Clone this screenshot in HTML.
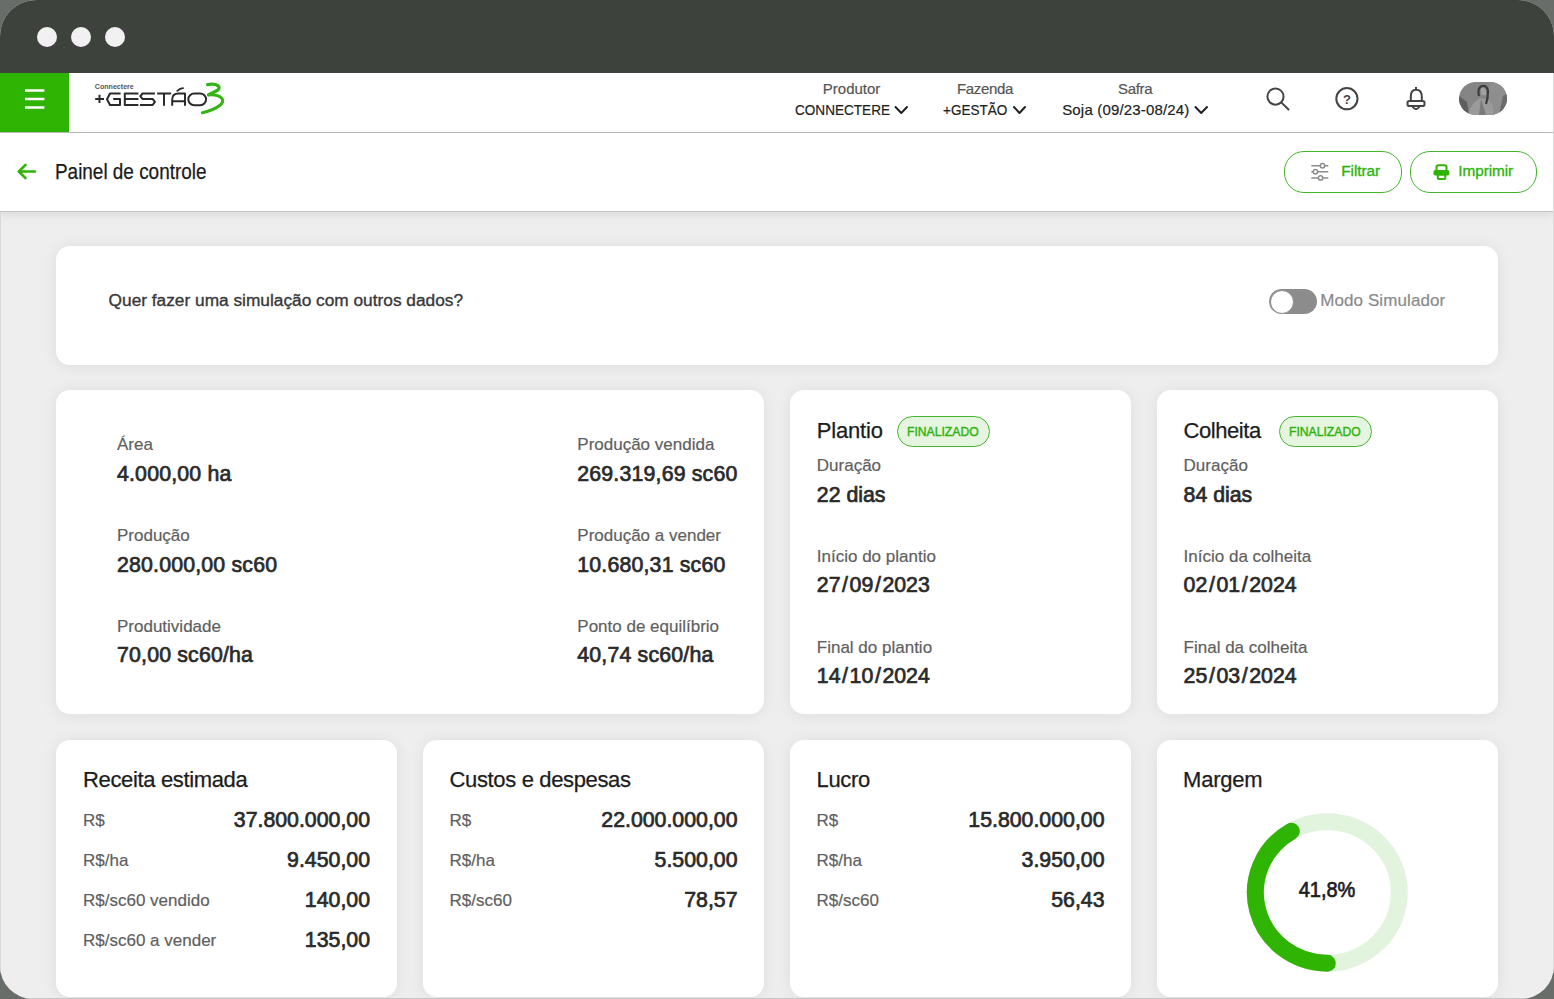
<!DOCTYPE html>
<html><head><meta charset="utf-8">
<style>
*{margin:0;padding:0;box-sizing:border-box}
html,body{width:1554px;height:999px;overflow:hidden;background:#686d69;font-family:"Liberation Sans",sans-serif}
#frame{position:absolute;left:0;top:0;width:1554px;height:999px;border-radius:36px 36px 33px 33px;overflow:hidden;background:#eeeeee}
#topbar{position:absolute;left:0;top:0;width:1554px;height:73px;background:#3e423d}
.dot{position:absolute;top:27px;width:20px;height:20px;border-radius:50%;background:#f1f1f1}
#hdr{position:absolute;left:0;top:73px;width:1554px;height:60px;background:#fff;border-bottom:1px solid #bdbdbd}
#menu{position:absolute;left:0;top:73px;width:69px;height:59px;background:#2fb404}
#sub{position:absolute;left:0;top:133px;width:1554px;height:79px;background:#fff;border-bottom:1px solid #c3c3c3;box-shadow:0 3px 9px rgba(0,0,0,.085)}
.card{position:absolute;background:#fff;border-radius:14px;box-shadow:0 1px 16px rgba(0,0,0,.075)}
.t{position:absolute;white-space:nowrap;line-height:1}
.btn{position:absolute;top:151px;height:42px;border:1.5px solid #45b52c;border-radius:20px;background:#fff}
.badge{position:absolute;top:416px;width:93px;height:31px;border:1.7px solid #45b62c;border-radius:16px;background:#e5f5e0}
svg{position:absolute;overflow:visible}
</style></head><body>
<div id="frame">
  <div id="topbar">
    <div class="dot" style="left:37px"></div>
    <div class="dot" style="left:71px"></div>
    <div class="dot" style="left:105px"></div>
  </div>
  <div id="hdr"></div>
  <div id="menu"></div>
  <!-- hamburger -->
  <svg style="left:0;top:0" width="1554" height="999">
    <g stroke="#fff" stroke-width="2.5" stroke-linecap="butt">
      <line x1="25" y1="90.4" x2="44.4" y2="90.4"/>
      <line x1="25" y1="98.9" x2="44.4" y2="98.9"/>
      <line x1="25" y1="107.4" x2="44.4" y2="107.4"/>
    </g>
  </svg>
  <!-- logo -->
  <svg style="left:0;top:0" width="1554" height="999">
    <text x="94.8" y="89" font-family="Liberation Sans" font-weight="bold" font-size="7" fill="#555" textLength="39" lengthAdjust="spacingAndGlyphs">Connectere</text>
    <g fill="none" stroke="#2a2a2a" stroke-width="2" stroke-linejoin="round">
      <path d="M95.2 98.9 H104 M99.5 94.8 V103"/>
      <path d="M120.6 93.5 H110 L107 99.2 L110 105 H120 V98.9 H113.2"/>
      <path d="M138.4 93.5 H124.8 V105 H138.4 M124.8 98.9 H138.4"/>
      <path d="M154.9 93.5 H142.5 L140.3 96.2 L142.5 98.9 H152.6 L154.9 101.9 L152.6 105 H140"/>
      <path d="M157.2 93.5 H171.1 M164 93.5 V105.8"/>
      <path d="M172.2 105.8 V99.5 Q172.2 93.5 178.5 93.5 H185 V105.8 M172.2 101.2 H185"/>
      <rect x="188.3" y="93.5" width="17.8" height="11.7" rx="6" ry="5.85"/>
    </g>
    <path d="M177.3 90.8 Q180 88.4 183 88.2" fill="none" stroke="#2a2a2a" stroke-width="1.8" stroke-linecap="round"/>
    <path d="M207.6 84.6 Q214 83.4 218.2 85.8 Q220.2 88 217.6 90.2 Q213 92.6 208.6 94.8" fill="none" stroke="#33b515" stroke-width="3.3" stroke-linecap="round" stroke-linejoin="round"/>
    <path d="M208.6 94.8 Q218 94.2 221.8 98.2 Q224.2 101.6 220.4 105 Q214 110 202.4 112.8" fill="none" stroke="#33b515" stroke-width="3" stroke-linecap="round" stroke-linejoin="round"/>
  </svg>
  <!-- nav chevrons -->
  <svg style="left:0;top:0" width="1554" height="999">
    <g fill="none" stroke="#222" stroke-width="2" stroke-linecap="round" stroke-linejoin="round">
      <path d="M895.5 107 L901.3 113 L907 107"/>
      <path d="M1014 107 L1019.5 113 L1025 107"/>
      <path d="M1195.5 107 L1201.2 113 L1207 107"/>
    </g>
    <!-- search -->
    <g fill="none" stroke="#444" stroke-width="2">
      <circle cx="1275.5" cy="96.6" r="8.1"/>
      <line x1="1281.5" y1="102.6" x2="1288.5" y2="109.5" stroke-linecap="round"/>
      <circle cx="1346.9" cy="98.7" r="10.6"/>
    </g>
    <text x="1346.9" y="104" font-family="Liberation Sans" font-weight="bold" font-size="13" fill="#444" text-anchor="middle">?</text>
    <!-- bell -->
    <g fill="none" stroke="#444" stroke-width="2">
      <path d="M1410.8 101 V96.5 Q1410.8 89.8 1416 89.8 Q1421.8 89.8 1421.8 96.5 V101"/>
      <rect x="1407.5" y="101" width="17" height="5" rx="1.8"/>
      <path d="M1412.5 106.5 Q1416 112 1419.5 106.5"/>
      <line x1="1416" y1="87" x2="1416" y2="89.8"/>
    </g>
  </svg>
  <!-- avatar -->
  <svg style="left:1459px;top:82px" width="48" height="33" viewBox="0 0 48 33">
    <defs><clipPath id="av"><rect x="0" y="0" width="48" height="33" rx="17" ry="16.5"/></clipPath></defs>
    <g clip-path="url(#av)">
      <rect width="48" height="33" fill="#858585"/>
      <rect x="30" y="0" width="18" height="33" fill="#8e8e8e"/>
      <path d="M0 14 L8 20 L10 33 L0 33 Z" fill="#5e5e5e"/>
      <path d="M44 14 L48 12 L48 33 L40 33 Z" fill="#6a6a6a"/>
      <path d="M9 33 Q12 20 22 16 L30 18 Q36 24 34 33 Z" fill="#9a9a9a"/>
      <path d="M22 17 L27 33 L20 33 Z" fill="#7a7a7a"/>
      <path d="M20 14 Q18 6 23 4 Q28 3 29 9 Q29 16 27 22" fill="none" stroke="#3b3b3b" stroke-width="2.2"/>
      <path d="M22 6 Q26 5 27 9 L27 13 Q24 14 22 12 Z" fill="#a0a0a0"/>
    </g>
  </svg>

  <div id="sub"></div>
  <svg style="left:0;top:0" width="1554" height="999">
    <g fill="none" stroke="#2fb404" stroke-width="2.6" stroke-linecap="round" stroke-linejoin="round">
      <path d="M35 171.5 H19 M25.5 164.8 L18.8 171.5 L25.5 178.2"/>
    </g>
  </svg>
  <div class="btn" style="left:1284px;width:118px"></div>
  <div class="btn" style="left:1410px;width:127px"></div>
  <svg style="left:0;top:0" width="1554" height="999">
    <g fill="none" stroke="#8c8c8c" stroke-width="1.5">
      <line x1="1311.3" y1="165.8" x2="1328.3" y2="165.8"/>
      <line x1="1311.3" y1="171.7" x2="1328.3" y2="171.7"/>
      <line x1="1311.3" y1="177.9" x2="1328.3" y2="177.9"/>
      <circle cx="1322.5" cy="165.8" r="2.2" fill="#fff"/>
      <circle cx="1315.4" cy="171.7" r="2.2" fill="#fff"/>
      <circle cx="1320.6" cy="177.9" r="2.2" fill="#fff"/>
    </g>
    <g fill="none" stroke="#2fb404" stroke-width="2">
      <rect x="1436.5" y="165.3" width="10" height="6" rx="2"/>
      <rect x="1437.8" y="174.5" width="7.5" height="4.5" rx="1"/>
    </g>
    <rect x="1433.4" y="170" width="16" height="5.5" rx="2" fill="#2fb404"/>
  </svg>

  <div class="card" style="left:56px;top:246px;width:1442px;height:119px"></div>
  <!-- toggle -->
  <div style="position:absolute;left:1269px;top:289px;width:48px;height:25px;border-radius:13px;background:#8c8c8c"></div>
  <div style="position:absolute;left:1269.5px;top:289.5px;width:24px;height:24px;border-radius:50%;background:#fff;border:1.5px solid #8c8c8c"></div>

  <div class="card" style="left:56px;top:390px;width:708px;height:324px"></div>
  <div class="card" style="left:790px;top:390px;width:341px;height:324px"></div>
  <div class="card" style="left:1157px;top:390px;width:341px;height:324px"></div>
  <div class="badge" style="left:897px"></div>
  <div class="badge" style="left:1279px"></div>
  <div class="card" style="left:56px;top:740px;width:341px;height:257px"></div>
  <div class="card" style="left:423px;top:740px;width:341px;height:257px"></div>
  <div class="card" style="left:790px;top:740px;width:341px;height:257px"></div>
  <div class="card" style="left:1157px;top:740px;width:341px;height:257px"></div>
  <!-- donut -->
  <svg style="left:0;top:0" width="1554" height="999">
    <ellipse cx="1327.3" cy="892.5" rx="72" ry="70.7" fill="none" stroke="#e2f4dd" stroke-width="17"/>
    <path d="M1327.3 963.2 A72 70.7 0 0 1 1291.3 831.3" fill="none" stroke="#2fb404" stroke-width="17" stroke-linecap="round"/>
  </svg>
<div class="t" style="top:81.00px;font-size:15px;color:#555;left:551.6px;width:600px;text-align:center;-webkit-text-stroke:0.2px currentColor;">Produtor</div>
<div class="t" style="top:101.90px;font-size:15px;color:#222;left:794.5px;transform:scaleX(0.905);transform-origin:0 0;-webkit-text-stroke:0.2px currentColor;">CONNECTERE</div>
<div class="t" style="top:81.00px;font-size:15px;color:#555;letter-spacing:-0.35px;left:685px;width:600px;text-align:center;-webkit-text-stroke:0.2px currentColor;">Fazenda</div>
<div class="t" style="top:101.90px;font-size:15px;color:#222;left:943.3px;transform:scaleX(0.903);transform-origin:0 0;-webkit-text-stroke:0.2px currentColor;">+GESTÃO</div>
<div class="t" style="top:81.00px;font-size:15px;color:#555;letter-spacing:-0.3px;left:835.2px;width:600px;text-align:center;-webkit-text-stroke:0.2px currentColor;">Safra</div>
<div class="t" style="top:101.90px;font-size:15px;color:#222;letter-spacing:0.17px;left:1062.2px;-webkit-text-stroke:0.2px currentColor;">Soja (09/23-08/24)</div>
<div class="t" style="top:161.38px;font-size:22px;color:#1a1a1a;left:55px;transform:scaleX(0.86);transform-origin:0 0;-webkit-text-stroke:0.25px currentColor;">Painel de controle</div>
<div class="t" style="top:162.56px;font-size:15.4px;color:#2fb30c;letter-spacing:-0.1px;left:1341.3px;-webkit-text-stroke:0.35px currentColor;">Filtrar</div>
<div class="t" style="top:162.56px;font-size:15.4px;color:#2fb30c;letter-spacing:-0.1px;left:1458.3px;-webkit-text-stroke:0.35px currentColor;">Imprimir</div>
<div class="t" style="top:291.96px;font-size:17.3px;color:#383838;left:108.6px;-webkit-text-stroke:0.35px currentColor;">Quer fazer uma simulação com outros dados?</div>
<div class="t" style="top:292.01px;font-size:17px;color:#8a8a8a;letter-spacing:0.1px;left:1320.2px;-webkit-text-stroke:0.2px currentColor;">Modo Simulador</div>
<div class="t" style="top:436.11px;font-size:17px;color:#5f5f5f;left:117px;-webkit-text-stroke:0.2px currentColor;">Área</div>
<div class="t" style="top:463.77px;font-size:21.3px;color:#2a2a2a;letter-spacing:0.18px;left:117px;-webkit-text-stroke:0.7px currentColor;">4.000,00 ha</div>
<div class="t" style="top:527.21px;font-size:17px;color:#5f5f5f;left:117px;-webkit-text-stroke:0.2px currentColor;">Produção</div>
<div class="t" style="top:554.97px;font-size:21.3px;color:#2a2a2a;letter-spacing:0.18px;left:117px;-webkit-text-stroke:0.7px currentColor;">280.000,00 sc60</div>
<div class="t" style="top:618.21px;font-size:17px;color:#5f5f5f;left:117px;-webkit-text-stroke:0.2px currentColor;">Produtividade</div>
<div class="t" style="top:645.47px;font-size:21.3px;color:#2a2a2a;letter-spacing:0.18px;left:117px;-webkit-text-stroke:0.7px currentColor;">70,00 sc60/ha</div>
<div class="t" style="top:436.11px;font-size:17px;color:#5f5f5f;left:577.3px;-webkit-text-stroke:0.2px currentColor;">Produção vendida</div>
<div class="t" style="top:463.77px;font-size:21.3px;color:#2a2a2a;letter-spacing:0.18px;left:577.3px;-webkit-text-stroke:0.7px currentColor;">269.319,69 sc60</div>
<div class="t" style="top:527.21px;font-size:17px;color:#5f5f5f;left:577.3px;-webkit-text-stroke:0.2px currentColor;">Produção a vender</div>
<div class="t" style="top:554.97px;font-size:21.3px;color:#2a2a2a;letter-spacing:0.18px;left:577.3px;-webkit-text-stroke:0.7px currentColor;">10.680,31 sc60</div>
<div class="t" style="top:618.21px;font-size:17px;color:#5f5f5f;left:577.3px;-webkit-text-stroke:0.2px currentColor;">Ponto de equilíbrio</div>
<div class="t" style="top:645.47px;font-size:21.3px;color:#2a2a2a;letter-spacing:0.18px;left:577.3px;-webkit-text-stroke:0.7px currentColor;">40,74 sc60/ha</div>
<div class="t" style="top:420.38px;font-size:22px;color:#1c1c1c;letter-spacing:-0.2px;left:816.8px;-webkit-text-stroke:0.25px currentColor;">Plantio</div>
<div class="t" style="top:456.71px;font-size:17px;color:#5f5f5f;left:816.8px;-webkit-text-stroke:0.2px currentColor;">Duração</div>
<div class="t" style="top:484.57px;font-size:21.3px;color:#2a2a2a;left:816.8px;-webkit-text-stroke:0.7px currentColor;">22 dias</div>
<div class="t" style="top:547.91px;font-size:17px;color:#5f5f5f;left:816.8px;-webkit-text-stroke:0.2px currentColor;">Início do plantio</div>
<div class="t" style="top:575.37px;font-size:21.3px;color:#2a2a2a;left:816.8px;-webkit-text-stroke:0.7px currentColor;">27<span style="margin:0 1.6px">/</span>09<span style="margin:0 1.6px">/</span>2023</div>
<div class="t" style="top:639.21px;font-size:17px;color:#5f5f5f;left:816.8px;-webkit-text-stroke:0.2px currentColor;">Final do plantio</div>
<div class="t" style="top:665.87px;font-size:21.3px;color:#2a2a2a;left:816.8px;-webkit-text-stroke:0.7px currentColor;">14<span style="margin:0 1.6px">/</span>10<span style="margin:0 1.6px">/</span>2024</div>
<div class="t" style="top:420.38px;font-size:22px;color:#1c1c1c;letter-spacing:-0.45px;left:1183.6px;-webkit-text-stroke:0.25px currentColor;">Colheita</div>
<div class="t" style="top:456.71px;font-size:17px;color:#5f5f5f;left:1183.6px;-webkit-text-stroke:0.2px currentColor;">Duração</div>
<div class="t" style="top:484.57px;font-size:21.3px;color:#2a2a2a;left:1183.6px;-webkit-text-stroke:0.7px currentColor;">84 dias</div>
<div class="t" style="top:547.91px;font-size:17px;color:#5f5f5f;left:1183.6px;-webkit-text-stroke:0.2px currentColor;">Início da colheita</div>
<div class="t" style="top:575.37px;font-size:21.3px;color:#2a2a2a;left:1183.6px;-webkit-text-stroke:0.7px currentColor;">02<span style="margin:0 1.6px">/</span>01<span style="margin:0 1.6px">/</span>2024</div>
<div class="t" style="top:639.21px;font-size:17px;color:#5f5f5f;left:1183.6px;-webkit-text-stroke:0.2px currentColor;">Final da colheita</div>
<div class="t" style="top:665.87px;font-size:21.3px;color:#2a2a2a;left:1183.6px;-webkit-text-stroke:0.7px currentColor;">25<span style="margin:0 1.6px">/</span>03<span style="margin:0 1.6px">/</span>2024</div>
<div class="t" style="top:424.90px;font-size:13px;color:#2fb30c;left:907.3px;transform:scaleX(0.936);transform-origin:0 0;-webkit-text-stroke:0.4px currentColor;">FINALIZADO</div>
<div class="t" style="top:424.90px;font-size:13px;color:#2fb30c;left:1289.3px;transform:scaleX(0.936);transform-origin:0 0;-webkit-text-stroke:0.4px currentColor;">FINALIZADO</div>
<div class="t" style="top:768.98px;font-size:22px;color:#1c1c1c;letter-spacing:-0.35px;left:83px;-webkit-text-stroke:0.25px currentColor;">Receita estimada</div>
<div class="t" style="top:812.01px;font-size:17px;color:#5f5f5f;left:83px;-webkit-text-stroke:0.2px currentColor;">R$</div>
<div class="t" style="top:809.77px;font-size:21.3px;color:#2a2a2a;right:1184px;-webkit-text-stroke:0.7px currentColor;">37.800.000,00</div>
<div class="t" style="top:851.81px;font-size:17px;color:#5f5f5f;left:83px;-webkit-text-stroke:0.2px currentColor;">R$/ha</div>
<div class="t" style="top:849.77px;font-size:21.3px;color:#2a2a2a;right:1184px;-webkit-text-stroke:0.7px currentColor;">9.450,00</div>
<div class="t" style="top:891.71px;font-size:17px;color:#5f5f5f;left:83px;-webkit-text-stroke:0.2px currentColor;">R$/sc60 vendido</div>
<div class="t" style="top:889.77px;font-size:21.3px;color:#2a2a2a;right:1184px;-webkit-text-stroke:0.7px currentColor;">140,00</div>
<div class="t" style="top:932.21px;font-size:17px;color:#5f5f5f;left:83px;-webkit-text-stroke:0.2px currentColor;">R$/sc60 a vender</div>
<div class="t" style="top:929.97px;font-size:21.3px;color:#2a2a2a;right:1184px;-webkit-text-stroke:0.7px currentColor;">135,00</div>
<div class="t" style="top:768.98px;font-size:22px;color:#1c1c1c;letter-spacing:-0.35px;left:449.5px;-webkit-text-stroke:0.25px currentColor;">Custos e despesas</div>
<div class="t" style="top:812.01px;font-size:17px;color:#5f5f5f;left:449.5px;-webkit-text-stroke:0.2px currentColor;">R$</div>
<div class="t" style="top:809.77px;font-size:21.3px;color:#2a2a2a;right:816.5px;-webkit-text-stroke:0.7px currentColor;">22.000.000,00</div>
<div class="t" style="top:851.81px;font-size:17px;color:#5f5f5f;left:449.5px;-webkit-text-stroke:0.2px currentColor;">R$/ha</div>
<div class="t" style="top:849.77px;font-size:21.3px;color:#2a2a2a;right:816.5px;-webkit-text-stroke:0.7px currentColor;">5.500,00</div>
<div class="t" style="top:891.71px;font-size:17px;color:#5f5f5f;left:449.5px;-webkit-text-stroke:0.2px currentColor;">R$/sc60</div>
<div class="t" style="top:889.77px;font-size:21.3px;color:#2a2a2a;right:816.5px;-webkit-text-stroke:0.7px currentColor;">78,57</div>
<div class="t" style="top:768.98px;font-size:22px;color:#1c1c1c;letter-spacing:-0.35px;left:816.5px;-webkit-text-stroke:0.25px currentColor;">Lucro</div>
<div class="t" style="top:812.01px;font-size:17px;color:#5f5f5f;left:816.5px;-webkit-text-stroke:0.2px currentColor;">R$</div>
<div class="t" style="top:809.77px;font-size:21.3px;color:#2a2a2a;right:449.5px;-webkit-text-stroke:0.7px currentColor;">15.800.000,00</div>
<div class="t" style="top:851.81px;font-size:17px;color:#5f5f5f;left:816.5px;-webkit-text-stroke:0.2px currentColor;">R$/ha</div>
<div class="t" style="top:849.77px;font-size:21.3px;color:#2a2a2a;right:449.5px;-webkit-text-stroke:0.7px currentColor;">3.950,00</div>
<div class="t" style="top:891.71px;font-size:17px;color:#5f5f5f;left:816.5px;-webkit-text-stroke:0.2px currentColor;">R$/sc60</div>
<div class="t" style="top:889.77px;font-size:21.3px;color:#2a2a2a;right:449.5px;-webkit-text-stroke:0.7px currentColor;">56,43</div>
<div class="t" style="top:768.98px;font-size:22px;color:#1c1c1c;letter-spacing:-0.2px;left:1183px;-webkit-text-stroke:0.25px currentColor;">Margem</div>
<div class="t" style="top:879.70px;font-size:21.5px;color:#1e1e1e;left:1027px;width:600px;text-align:center;transform:scaleX(0.93);transform-origin:50% 0;-webkit-text-stroke:0.7px currentColor;">41,8%</div>
<div style="position:absolute;left:0;top:212px;width:1px;height:787px;background:#d8d9d9"></div>
<div style="position:absolute;left:1553px;top:73px;width:1px;height:926px;background:#dcdcdc"></div>
<div style="position:absolute;left:0;top:998px;width:1554px;height:1px;background:#c4c6c6"></div>
</div>
</body></html>
